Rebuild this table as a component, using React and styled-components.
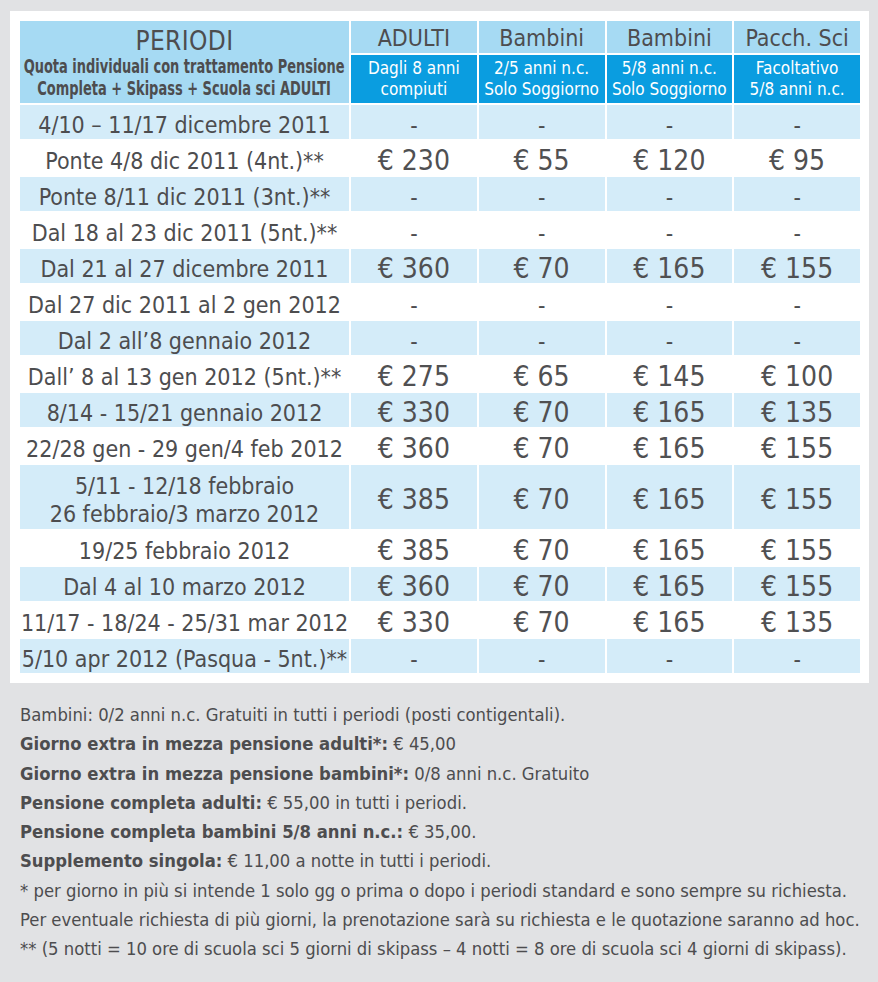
import React from 'react';
import styled, { createGlobalStyle } from 'styled-components';

const GlobalStyle = createGlobalStyle`
  html, body {
    margin: 0;
    padding: 0;
    background: #e1e2e4;
  }
  body {
    font-family: 'DejaVu Sans Condensed', 'DejaVu Sans', 'Liberation Sans', sans-serif;
    color: #4d4d4f;
  }
`;

const Page = styled.div`
  width: 878px;
  padding: 11px 0 20px 10px;
  box-sizing: border-box;
`;

const Card = styled.div`
  width: 859px;
  background: #fff;
  padding: 10px 9px 10px 10px;
  box-sizing: border-box;
`;

const Grid = styled.div`
  display: grid;
  grid-template-columns: 329px repeat(4, 1fr);
  grid-template-rows: 32px 48px repeat(10, 34px) 64px repeat(4, 34px);
  gap: 2px;
  width: 840px;
`;

const PeriodHead = styled.div`
  grid-row: span 2;
  background: #a6daf3;
  display: flex;
  flex-direction: column;
  align-items: center;
  justify-content: center;
  padding-top: 2px;
`;

const PeriodTitle = styled.div`
  font-size: 26px;
  line-height: 28px;
  letter-spacing: 0.4px;
`;

const PeriodSub = styled.div`
  font-size: 19px;
  line-height: 22px;
  font-weight: bold;
  text-align: center;
  white-space: nowrap;
  transform: scaleX(0.76);
`;

const ColHead = styled.div`
  background: #a6daf3;
  display: flex;
  align-items: center;
  justify-content: center;
  font-size: 23px;
  padding-top: 2px;
`;

const SubHead = styled.div`
  background: #0a9de0;
  color: #fff;
  display: flex;
  align-items: center;
  justify-content: center;
  text-align: center;
  font-size: 17px;
  line-height: 21px;
`;

const Cell = styled.div`
  background: ${({ $shade }) => ($shade ? '#d4ecf9' : 'transparent')};
  color: ${({ $price }) => ($price ? '#505052' : '#4d4d4f')};
  display: flex;
  align-items: center;
  justify-content: center;
  text-align: center;
  font-size: ${({ $price }) => ($price ? '28px' : '23px')};
  line-height: 28px;
  padding-top: 5px;
`;

const Notes = styled.div`
  padding: 17px 0 0 10px;
  font-size: 18.3px;
  line-height: 29.3px;
  color: #4d4d4f;
`;

const Line = styled.div`
  white-space: nowrap;
  b {
    font-weight: bold;
  }
`;

const rows = [
  ['4/10 – 11/17 dicembre 2011', '-', '-', '-', '-'],
  ['Ponte 4/8 dic 2011 (4nt.)**', '€ 230', '€ 55', '€ 120', '€ 95'],
  ['Ponte 8/11 dic 2011 (3nt.)**', '-', '-', '-', '-'],
  ['Dal 18 al 23 dic 2011 (5nt.)**', '-', '-', '-', '-'],
  ['Dal 21 al 27 dicembre 2011', '€ 360', '€ 70', '€ 165', '€ 155'],
  ['Dal 27 dic 2011 al 2 gen 2012', '-', '-', '-', '-'],
  ['Dal 2 all’8 gennaio 2012', '-', '-', '-', '-'],
  ['Dall’ 8 al 13 gen 2012 (5nt.)**', '€ 275', '€ 65', '€ 145', '€ 100'],
  ['8/14 - 15/21 gennaio 2012', '€ 330', '€ 70', '€ 165', '€ 135'],
  ['22/28 gen - 29 gen/4 feb 2012', '€ 360', '€ 70', '€ 165', '€ 155'],
  [['5/11 - 12/18 febbraio', '26 febbraio/3 marzo 2012'], '€ 385', '€ 70', '€ 165', '€ 155'],
  ['19/25 febbraio 2012', '€ 385', '€ 70', '€ 165', '€ 155'],
  ['Dal 4 al 10 marzo 2012', '€ 360', '€ 70', '€ 165', '€ 155'],
  ['11/17 - 18/24 - 25/31 mar 2012', '€ 330', '€ 70', '€ 165', '€ 135'],
  ['5/10 apr 2012 (Pasqua - 5nt.)**', '-', '-', '-', '-'],
];

const heads = [
  ['ADULTI', 'Dagli 8 anni', 'compiuti'],
  ['Bambini', '2/5 anni n.c.', 'Solo Soggiorno'],
  ['Bambini', '5/8 anni n.c.', 'Solo Soggiorno'],
  ['Pacch. Sci', 'Facoltativo', '5/8 anni n.c.'],
];

function PriceTable() {
  return (
    <Grid>
      <PeriodHead>
        <PeriodTitle>PERIODI</PeriodTitle>
        <PeriodSub>
          Quota individuali con trattamento Pensione
          <br />
          Completa + Skipass + Scuola sci ADULTI
        </PeriodSub>
      </PeriodHead>
      {heads.map((h, i) => (
        <ColHead key={'h' + i}>{h[0]}</ColHead>
      ))}
      {heads.map((h, i) => (
        <SubHead key={'s' + i}>
          {h[1]}
          <br />
          {h[2]}
        </SubHead>
      ))}
      {rows.map((row, r) =>
        row.map((val, c) => (
          <Cell key={r + '-' + c} $shade={r % 2 === 0} $price={c > 0 && val !== '-'}>
            {Array.isArray(val) ? (
              <span>
                {val[0]}
                <br />
                {val[1]}
              </span>
            ) : (
              val
            )}
          </Cell>
        ))
      )}
    </Grid>
  );
}

export default function App() {
  return (
    <Page>
      <GlobalStyle />
      <Card>
        <PriceTable />
      </Card>
      <Notes>
        <Line>Bambini: 0/2 anni n.c. Gratuiti in tutti i periodi (posti contigentali).</Line>
        <Line><b>Giorno extra in mezza pensione adulti*:</b> € 45,00</Line>
        <Line><b>Giorno extra in mezza pensione bambini*:</b> 0/8 anni n.c. Gratuito</Line>
        <Line><b>Pensione completa adulti:</b> € 55,00 in tutti i periodi.</Line>
        <Line><b>Pensione completa bambini 5/8 anni n.c.:</b> € 35,00.</Line>
        <Line><b>Supplemento singola:</b> € 11,00 a notte in tutti i periodi.</Line>
        <Line>* per giorno in più si intende 1 solo gg o prima o dopo i periodi standard e sono sempre su richiesta.</Line>
        <Line>Per eventuale richiesta di più giorni, la prenotazione sarà su richiesta e le quotazione saranno ad hoc.</Line>
        <Line>** (5 notti = 10 ore di scuola sci 5 giorni di skipass – 4 notti = 8 ore di scuola sci 4 giorni di skipass).</Line>
      </Notes>
    </Page>
  );
}
